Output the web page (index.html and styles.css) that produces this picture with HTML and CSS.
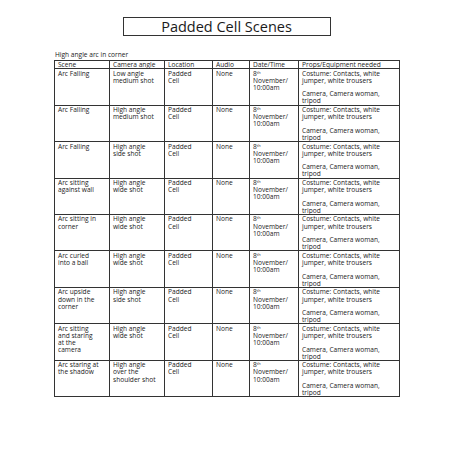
FILE: index.html
```html
<!DOCTYPE html>
<html>
<head>
<meta charset="utf-8">
<link rel="stylesheet" href="styles.css">
</head>
<body>
<div class="page">
  <div class="title-wrap"><div class="title">Padded Cell Scenes</div></div>
  <div class="subtitle">High angle arc in corner</div>
  <table class="scenes">
    <colgroup>
      <col class="c-scene"><col class="c-cam"><col class="c-loc"><col class="c-audio"><col class="c-date"><col class="c-props">
    </colgroup>
    <tr class="head"><td>Scene</td><td>Camera angle</td><td>Location</td><td>Audio</td><td>Date/Time</td><td>Props/Equipment needed</td></tr>
    <tr><td>Arc Falling</td><td>Low angle<br>medium shot</td><td>Padded<br>Cell</td><td>None</td><td>8<sup>th</sup><br>November/<br>10:00am</td><td><p>Costume: Contacts, white<br>jumper, white trousers</p><p>Camera, Camera woman,<br>tripod</p></td></tr>
    <tr><td>Arc Falling</td><td>High angle<br>medium shot</td><td>Padded<br>Cell</td><td>None</td><td>8<sup>th</sup><br>November/<br>10:00am</td><td><p>Costume: Contacts, white<br>jumper, white trousers</p><p>Camera, Camera woman,<br>tripod</p></td></tr>
    <tr><td>Arc Falling</td><td>High angle<br>side shot</td><td>Padded<br>Cell</td><td>None</td><td>8<sup>th</sup><br>November/<br>10:00am</td><td><p>Costume: Contacts, white<br>jumper, white trousers</p><p>Camera, Camera woman,<br>tripod</p></td></tr>
    <tr><td>Arc sitting<br>against wall</td><td>High angle<br>wide shot</td><td>Padded<br>Cell</td><td>None</td><td>8<sup>th</sup><br>November/<br>10:00am</td><td><p>Costume: Contacts, white<br>jumper, white trousers</p><p>Camera, Camera woman,<br>tripod</p></td></tr>
    <tr><td>Arc sitting in<br>corner</td><td>High angle<br>wide shot</td><td>Padded<br>Cell</td><td>None</td><td>8<sup>th</sup><br>November/<br>10:00am</td><td><p>Costume: Contacts, white<br>jumper, white trousers</p><p>Camera, Camera woman,<br>tripod</p></td></tr>
    <tr><td>Arc curled<br>into a ball</td><td>High angle<br>wide shot</td><td>Padded<br>Cell</td><td>None</td><td>8<sup>th</sup><br>November/<br>10:00am</td><td><p>Costume: Contacts, white<br>jumper, white trousers</p><p>Camera, Camera woman,<br>tripod</p></td></tr>
    <tr><td>Arc upside<br>down in the<br>corner</td><td>High angle<br>side shot</td><td>Padded<br>Cell</td><td>None</td><td>8<sup>th</sup><br>November/<br>10:00am</td><td><p>Costume: Contacts, white<br>jumper, white trousers</p><p>Camera, Camera woman,<br>tripod</p></td></tr>
    <tr><td>Arc sitting<br>and staring<br>at the<br>camera</td><td>High angle<br>wide shot</td><td>Padded<br>Cell</td><td>None</td><td>8<sup>th</sup><br>November/<br>10:00am</td><td><p>Costume: Contacts, white<br>jumper, white trousers</p><p>Camera, Camera woman,<br>tripod</p></td></tr>
    <tr><td>Arc staring at<br>the shadow</td><td>High angle<br>over the<br>shoulder shot</td><td>Padded<br>Cell</td><td>None</td><td>8<sup>th</sup><br>November/<br>10:00am</td><td><p>Costume: Contacts, white<br>jumper, white trousers</p><p>Camera, Camera woman,<br>tripod</p></td></tr>
  </table>
</div>
</body>
</html>
```

FILE: styles.css
```css
html, body {
  margin: 0;
  padding: 0;
  background: #fff;
}
body {
  font-family: "Open Sans", Lato, sans-serif;
  color: #222;
}
.page {
  padding: 17px 0 0 54px;
}
.title-wrap {
  width: 345px;
  display: flex;
  justify-content: center;
}
.title {
  box-sizing: border-box;
  width: 208px;
  height: 19px;
  border: 1px solid #333;
  text-align: center;
  font-size: 14.5px;
  line-height: 17px;
  color: #1a1a1a;
}
.subtitle {
  margin-top: 15px;
  padding-left: 1px;
  font-size: 6.6px;
  line-height: 8px;
}
.scenes {
  margin-top: 1px;
  border-collapse: collapse;
  table-layout: fixed;
  width: 345px;
  font-size: 6.6px;
  line-height: 7.1px;
  white-space: nowrap;
}
.c-scene { width: 55px; }
.c-cam { width: 55px; }
.c-loc { width: 48px; }
.c-audio { width: 37px; }
.c-date { width: 49px; }
.c-props { width: 101px; }
.scenes td {
  border: 1px solid #333;
  vertical-align: top;
  padding: 0.5px 2px 0 3px;
  height: 34.7px;
  overflow: hidden;
}
.scenes tr.head td {
  height: 7px;
  padding-top: 0;
}
.scenes p {
  margin: 0 0 6.6px 0;
}
.scenes p:last-child {
  margin-bottom: 0;
}
.scenes sup {
  font-size: 3.8px;
  line-height: 0;
  vertical-align: 2.5px;
}
```
